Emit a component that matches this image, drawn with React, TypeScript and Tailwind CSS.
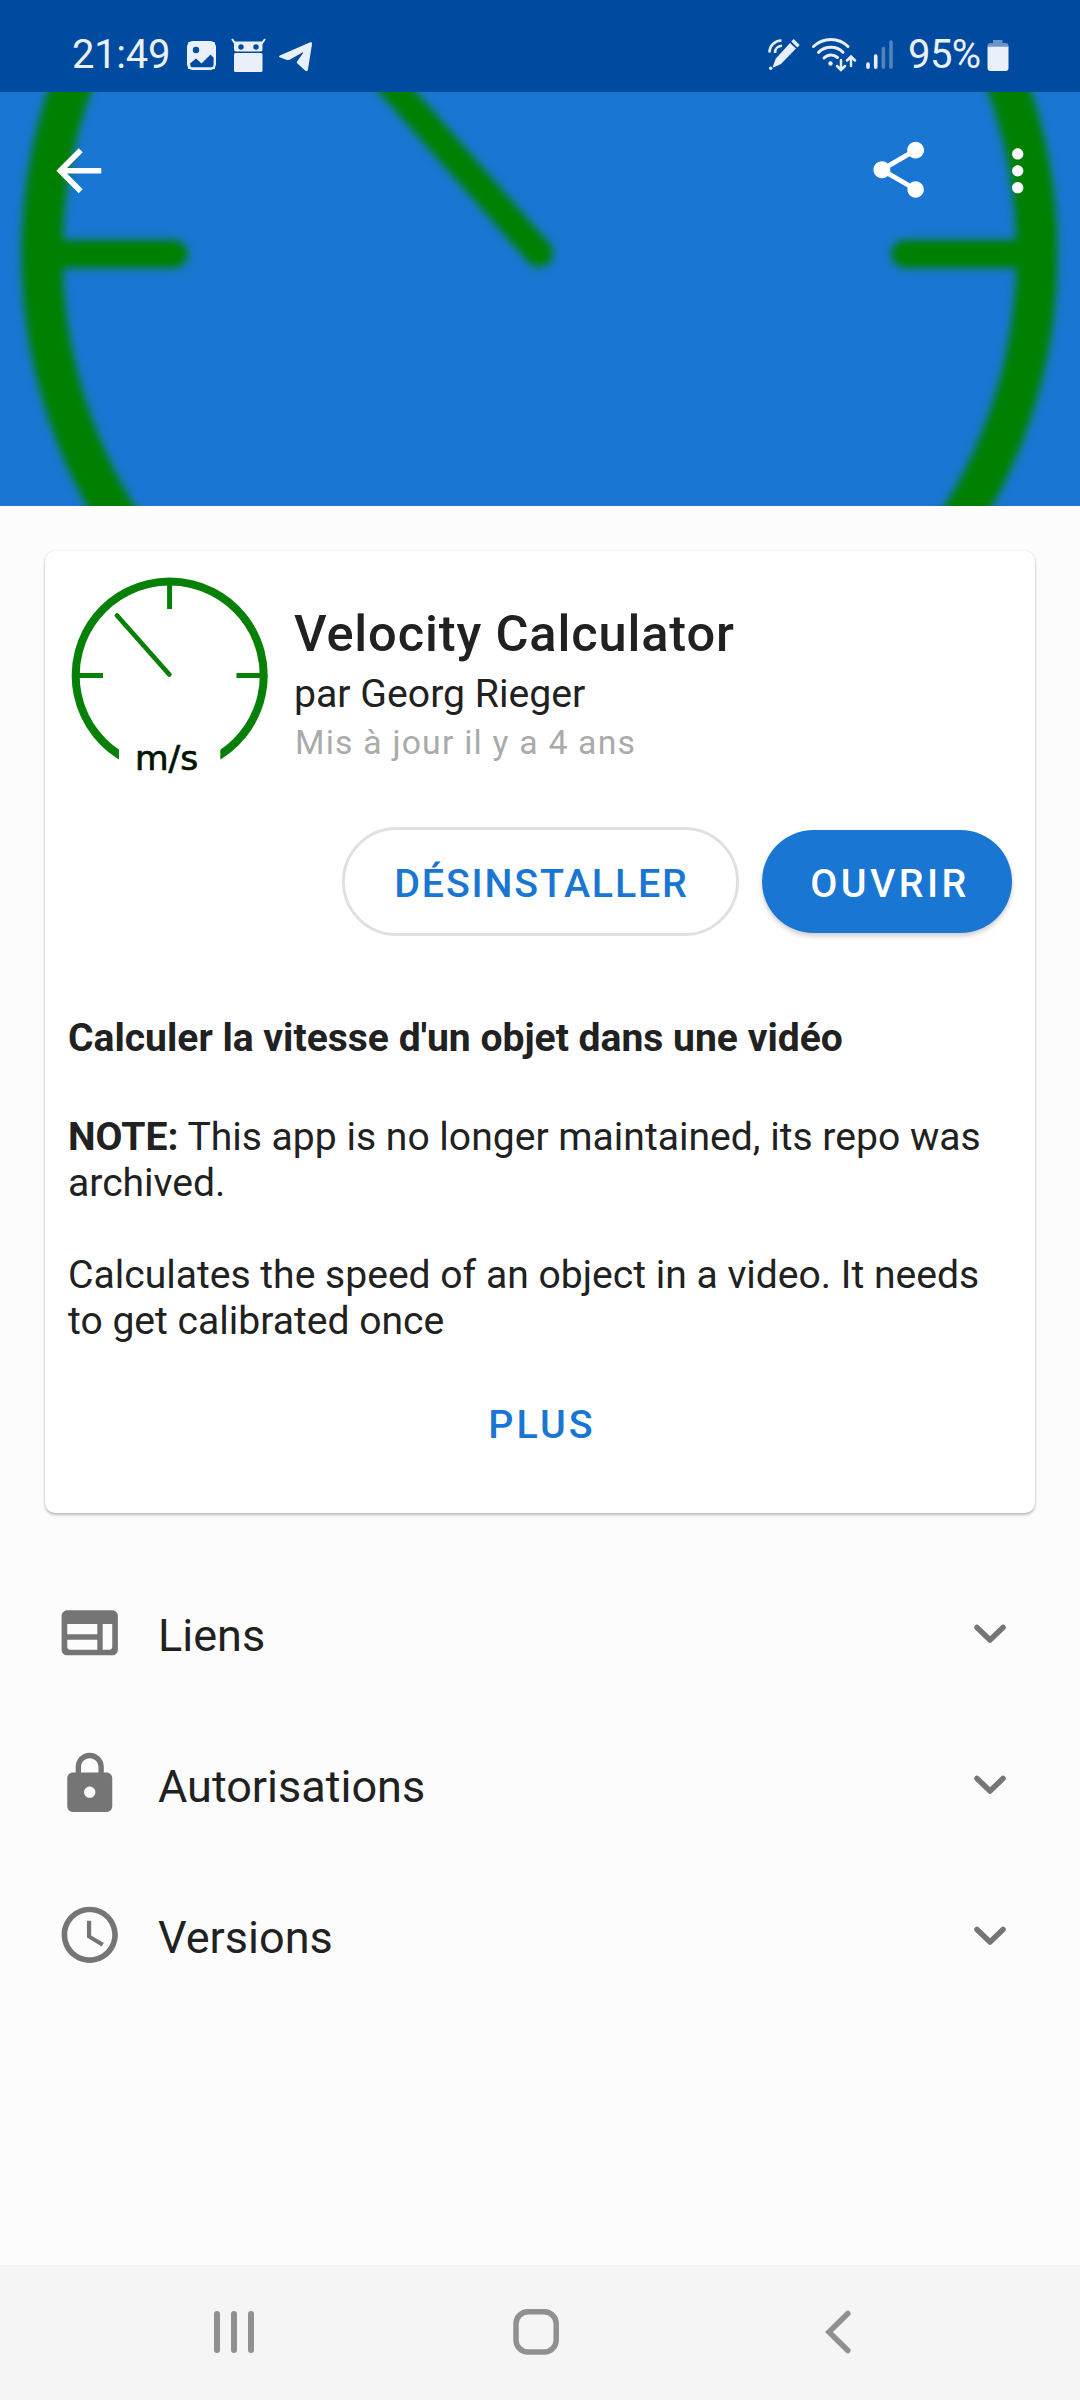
import React from "react";

const LIGHT = "#e9f0fa";

function StatusBar() {
  return (
    <div className="flex h-[92px] items-start bg-[#004a9f] pt-4 text-[#e9f0fa]">
      <span className="ml-[72px] h-[76px] w-[115px] text-[40px] leading-[77px] tracking-[-0.3px]">21:49</span>
      <svg className="h-[76px] w-[29px]" viewBox="187 16 29 76" fill="none">
        <path d="M188 42h27v27h-27z" fill={LIGHT} />
        <circle cx="196" cy="50" r="3.2" fill="#004a9f" />
        <path d="M190 63.500l6-5 5.500 5 9-9 4 4v7.500q0 1.500-1.500 1.500h-21q-1.500 0-1.500-1.500z" fill="#004a9f" />
        <path d="M190.500 62.500l5.500-3.200 6 5.200 8-8 5 5" stroke={LIGHT} strokeWidth="0" />
        <rect x="188.2" y="42.2" width="26.6" height="26.6" rx="4.5" stroke={LIGHT} strokeWidth="2.4" />
        <path d="M187 41h3q-2 0-2 3l-1 1zM216 41h-3q2 0 2 3l1 1z" fill="#004a9f" />
      </svg>
      <svg className="ml-[14px] h-[76px] w-[36px]" viewBox="230 16 36 76" fill="none">
        <path d="M232 39l3.500 5M265 39l-3.500 5" stroke={LIGHT} strokeWidth="2" />
        <path d="M234 41.500h28.500v8q0 2-2 2h-24.500q-2 0-2-2z" fill={LIGHT} />
        <circle cx="241" cy="47" r="2.700" fill="#004a9f" />
        <circle cx="256" cy="47" r="2.700" fill="#004a9f" />
        <rect x="234" y="53" width="28.500" height="19" rx="1.500" fill={LIGHT} />
      </svg>
      <svg className="ml-[13px] h-[76px] w-[33px]" viewBox="279 16 33 76">
        <path
          d="M279.500 57.300c-.8-.5-.6-1.300.3-1.700l30.500-13.300c1.300-.5 2 .2 1.800 1.400l-4.200 26c-.3 1.500-1.300 1.800-2.500 1l-8-7.200c-.8-.7-.8-1.500-.1-2.300l5.800-8.200c.4-.7-.1-1-.7-.6l-12.800 7.300c-.8.5-1.800.5-2.700.2z"
          fill={LIGHT}
        />
      </svg>
      <svg className="ml-auto h-[76px] w-[32px]" viewBox="768 16 32 76" fill="none">
        <path
          d="M769.500 52.500c0-7 5.300-11.800 12-12M775 53c0-4.300 3-7 7-7.200"
          stroke={LIGHT}
          strokeWidth="2.600"
        />
        <path d="M790 43l6 5.500-15 15.500-7.500 3.500-.8-.8 3-8z" fill={LIGHT} />
        <path d="M792.500 40.300l6 6" stroke={LIGHT} strokeWidth="3.400" />
        <circle cx="770.700" cy="68.300" r="1.700" fill={LIGHT} />
      </svg>
      <svg className="ml-[11px] h-[76px] w-[46px]" viewBox="811 16 46 76" fill="none" stroke={LIGHT} strokeLinecap="round">
        <path d="M813.500 46.500c10-9.300 25-9.300 34.500 0M818.500 52.300c7-6.600 18-6.600 24.500 0M824 58c4-4 9.500-4 13.500-.5" strokeWidth="3" />
        <circle cx="830.500" cy="63.500" r="2.200" fill={LIGHT} stroke="none" />
        <path d="M841 60v9.500M837 66l4 4 4-4M851 66v-9M847 60.500l4-4 4 4" strokeWidth="2.500" />
      </svg>
      <svg className="ml-[9px] h-[76px] w-[28px]" viewBox="866 16 28 76" fill="none" stroke={LIGHT} strokeWidth="3.600" strokeLinecap="round">
        <path d="M868 64v3.300M875.700 56v11.300" />
        <path d="M883.400 48.500v18.800M891 42v25.300" opacity=".35" />
      </svg>
      <span className="ml-[14px] h-[76px] w-[78.500px] text-[40px] leading-[77px] tracking-[-0.6px]">95%</span>
      <svg className="mr-[71.500px] h-[76px] w-[22px]" viewBox="986.500 16 22 76">
        <path d="M992.500 40h9.500v3h-9.500zM987 46.500v-.5q0-3 3-3h15q3 0 3 3v.5z" fill={LIGHT} opacity=".45" />
        <path d="M987 46.500h21v21.500q0 3-3 3h-15q-3 0-3-3z" fill={LIGHT} />
      </svg>
    </div>
  );
}

function MdIcon({ d, className }: { d: string; className?: string }) {
  return (
    <svg viewBox="0 0 24 24" fill="currentColor" className={"size-[67.5px] shrink-0 " + (className ?? "")}>
      <path fillRule="evenodd" d={d} />
    </svg>
  );
}

function Hero() {
  return (
    <div className="relative h-[414px] overflow-hidden bg-[#1976d2]">
      <svg className="absolute inset-0 size-full" viewBox="0 92 1080 414" fill="none" stroke="#008000">
        <defs>
          <filter id="soft" filterUnits="userSpaceOnUse" x="-20" y="-300" width="1120" height="1150">
            <feGaussianBlur stdDeviation="4" />
          </filter>
        </defs>
        <g filter="url(#soft)">
          <circle cx="539.500" cy="254" r="497.500" strokeWidth="41" />
          <path d="M42 254H178M901 254H1037" strokeWidth="28" />
          <path d="M174 254H175M904 254H905" strokeWidth="26" strokeLinecap="round" />
          <path d="M270 -53L539 253" strokeWidth="28" strokeLinecap="round" />
        </g>
      </svg>
      <div className="relative flex pt-[45px] text-white">
        <MdIcon className="ml-[44.500px]" d="M20 11H7.830l5.590-5.590L12 4l-8 8 8 8 1.410-1.410L7.830 13H20v-2z" />
        <svg viewBox="0 0 24 24" fill="currentColor" className="-mt-px ml-auto size-[67.5px] shrink-0">
          <path d="M18 16.080c-.76 0-1.440.3-1.960.77L8.910 12.700c.05-.23.09-.46.09-.7s-.04-.47-.09-.7l7.050-4.110c.54.5 1.250.81 2.040.81 1.660 0 3-1.340 3-3s-1.340-3-3-3-3 1.340-3 3c0 .24.04.47.09.7L8.040 9.810C7.500 9.310 6.790 9 6 9c-1.660 0-3 1.340-3 3s1.340 3 3 3c.79 0 1.500-.31 2.040-.81l7.120 4.160c-.05.21-.08.43-.08.65 0 1.610 1.310 2.920 2.920 2.920s2.920-1.310 2.920-2.920-1.310-2.920-2.920-2.920z" />
        </svg>
        <MdIcon
          className="ml-[52px] mr-[28.500px]"
          d="M12 8c1.100 0 2-.9 2-2s-.9-2-2-2-2 .9-2 2 .9 2 2 2zm0 2c-1.100 0-2 .9-2 2s.9 2 2 2 2-.9 2-2-.9-2-2-2zm0 6c-1.100 0-2 .9-2 2s.9 2 2 2 2-.9 2-2-.9-2-2-2z"
        />
      </div>
    </div>
  );
}

function Gauge() {
  return (
    <svg className="h-[208px] w-[203px] shrink-0" viewBox="68 573 203 208" fill="none" stroke="#068006">
      <defs>
        <clipPath id="ends">
          <path d="M60 560H280V700H60ZM60 700H119V780H60ZM220.300 700H280V780H220.300Z" />
        </clipPath>
      </defs>
      <path clipPath="url(#ends)" d="M127 759.200A94 94 0 1 1 212.400 759.200" strokeWidth="8" />
      <path d="M169.600 582V609M76 675.500H103M236.500 675.500H263" strokeWidth="5" />
      <path d="M117 615.500L169.300 674.500" strokeWidth="4.800" strokeLinecap="round" />
      <text x="135" y="770" fontSize="34.500" fill="#001400" stroke="#001400" strokeWidth="0.7" className="font-['DejaVu_Sans']">
        m/s
      </text>
    </svg>
  );
}

function AppCard() {
  return (
    <div className="mx-[45px] mt-[45px] flex h-[962px] flex-col rounded-[10px] bg-white px-[23px] pt-[22px] shadow-[0_2px_3px_rgba(0,0,0,0.25),0_0_2px_rgba(0,0,0,0.1)]">
      <div className="flex h-[203px]">
        <Gauge />
        <div className="ml-[23px] pt-[31px]">
          <h1 className="text-[50.6px] font-medium leading-[60px] tracking-[0.85px]">Velocity Calculator</h1>
          <p className="mt-[7px] text-[39.2px] leading-[46px]">par Georg Rieger</p>
          <p className="ml-px mt-[6px] text-[33.75px] leading-10 tracking-[1.2px] text-[#aaaaaa]">Mis à jour il y a 4 ans</p>
        </div>
      </div>
      <div className="mt-[51px] flex h-[109px] items-center justify-end gap-[23px] text-[39.4px] font-medium">
        <button className="h-[109px] w-[397px] rounded-full border-[3px] border-[#e0e0e0] pl-[2px] pt-1 leading-none tracking-[1.8px] text-[#1976d2]">DÉSINSTALLER</button>
        <button className="h-[103px] w-[250px] rounded-full bg-[#1976d2] pl-[6px] pt-1 leading-none tracking-[3.4px] text-white shadow-[0_3px_5px_rgba(0,0,0,0.2)]">OUVRIR</button>
      </div>
      <p className="mt-[78.500px] text-[39.05px] font-bold leading-[46px]">Calculer la vitesse d'un objet dans une vidéo</p>
      <div className="mt-[53px] whitespace-nowrap text-[39.1px] leading-[46px]">
        <p><b>NOTE:</b> This app is no longer maintained, its repo was<br />archived.</p>
        <p className="mt-[46px]">Calculates the speed of an object in a video. It needs<br />to get calibrated once</p>
      </div>
      <button className="mt-[58px] self-center pl-[4px] text-[39.4px] font-medium leading-[46px] tracking-[3.1px] text-[#1976d2]">PLUS</button>
    </div>
  );
}

const SECTIONS = [
  {
    label: "Liens",
    d: "M20 4H4c-1.100 0-2 .9-2 2v12c0 1.100.9 2 2 2h16c1.100 0 2-.9 2-2V6c0-1.100-.9-2-2-2zM4 8.900h10.700v3.600H4zM4 14.500h10.700V18H5q-1 0-1-1zM16.600 8.900H20V17q0 1-1 1h-2.400z",
  },
  {
    label: "Autorisations",
    d: "M18 8h-1V6c0-2.760-2.240-5-5-5S7 3.240 7 6v2H6c-1.100 0-2 .9-2 2v10c0 1.100.9 2 2 2h12c1.100 0 2-.9 2-2V10c0-1.100-.9-2-2-2zm-6 9c-1.100 0-2-.9-2-2s.9-2 2-2 2 .9 2 2-.9 2-2 2zm3.100-9H8.900V6c0-1.710 1.390-3.100 3.100-3.100 1.710 0 3.100 1.390 3.100 3.100v2z",
  },
  {
    label: "Versions",
    d: "M11.990 2C6.470 2 2 6.480 2 12s4.470 10 9.990 10C17.520 22 22 17.520 22 12S17.520 2 11.990 2zM12 20c-4.420 0-8-3.580-8-8s3.580-8 8-8 8 3.580 8 8-3.580 8-8 8zm.5-13H11v6l5.250 3.150.75-1.230-4.500-2.670z",
  },
];

function Sections() {
  return (
    <div className="mt-[44px] flex flex-col">
      {SECTIONS.map((s) => (
        <div key={s.label} className="flex h-[151px] items-center pl-[56px] pr-[72px]">
          <MdIcon d={s.d} className="text-[#757575]" />
          <span className="ml-[34.500px] pt-[7px] text-[45px] leading-[54px]">{s.label}</span>
          <svg className="ml-auto h-9 w-9" viewBox="0 0 36 36" fill="none" stroke="#757575" strokeWidth="5.500" strokeLinecap="round" strokeLinejoin="round">
            <path d="M5 12.500l13 12.500L31 12.500" />
          </svg>
        </div>
      ))}
    </div>
  );
}

function NavBar() {
  return (
    <div className="mt-auto flex h-[135px] items-start bg-[#f5f5f5] pt-[42px]">
      <svg className="ml-[212px] h-[50px] w-[44px]" viewBox="212 2307 44 50" fill="none" stroke="#909090" strokeWidth="6" strokeLinecap="round">
        <path d="M217 2314v36M234 2314v36M251 2314v36" />
      </svg>
      <svg className="ml-[255px] h-[50px] w-[50px]" viewBox="511 2307 50 50" fill="none" stroke="#909090" strokeWidth="5.500">
        <rect x="516" y="2311.800" width="40.200" height="40.200" rx="12" />
      </svg>
      <svg className="ml-[263px] h-[50px] w-[30px]" viewBox="824 2307 30 50" fill="none" stroke="#909090" strokeWidth="5.500" strokeLinecap="round">
        <path d="M847.800 2313.500L829 2332L847.800 2350.500" strokeLinejoin="miter" />
      </svg>
    </div>
  );
}

export default function App() {
  return (
    <div className="flex h-[2400px] w-[1080px] flex-col overflow-hidden bg-[#fcfcfc] font-[Roboto,sans-serif] text-[#212121]">
      <StatusBar />
      <Hero />
      <AppCard />
      <Sections />
      <NavBar />
    </div>
  );
}
